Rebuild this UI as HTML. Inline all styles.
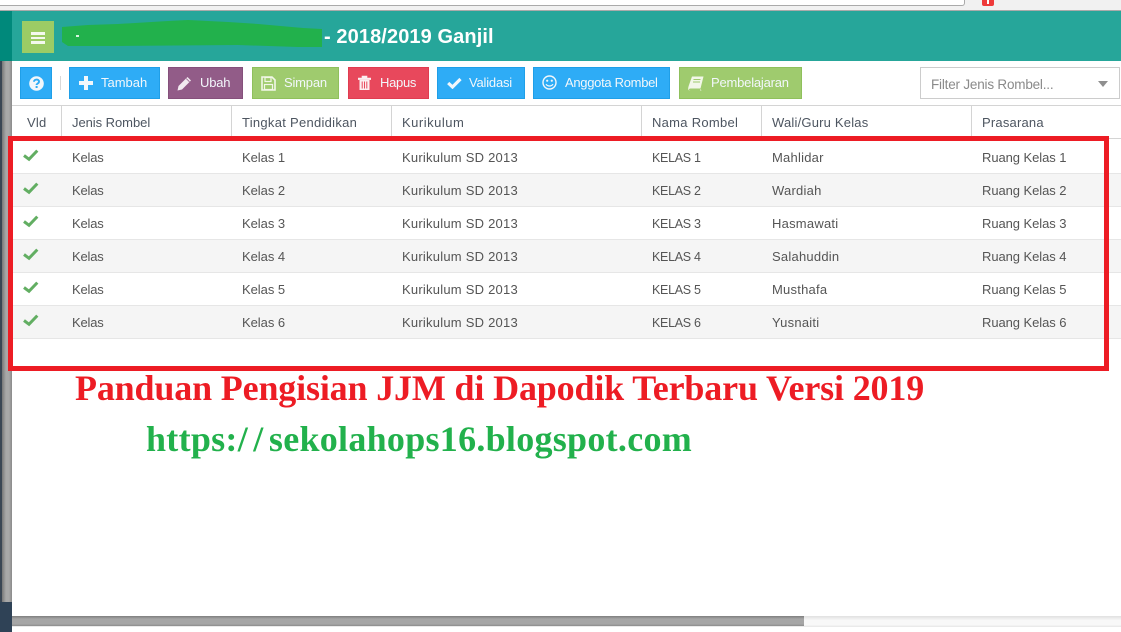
<!DOCTYPE html>
<html><head><meta charset="utf-8">
<style>
html,body{margin:0;padding:0;background:#fff;}
#p{position:relative;width:1121px;height:632px;overflow:hidden;background:#fff;font-family:"Liberation Sans",sans-serif;}
#p div,#p span.a,#p svg{position:absolute;}
.t{position:absolute;font-size:13px;color:#555;white-space:nowrap;letter-spacing:.23px;line-height:16px;margin-top:1px;}
.c1{letter-spacing:-.2px;}
.c2{letter-spacing:-.05px;}
.c4{font-size:12.5px;letter-spacing:-.3px;}
.c6{letter-spacing:-.07px;}
.h{position:absolute;font-size:13px;color:#4d5560;white-space:nowrap;letter-spacing:.2px;line-height:16px;top:115px;}
.b{position:absolute;top:67px;height:30px;border:1px solid;color:#fff;box-sizing:content-box;}
.b b{position:absolute;top:7px;font-weight:normal;font-size:13px;letter-spacing:-.2px;line-height:16px;white-space:nowrap;color:#f2f7fb;}
.blue{background:#2eacf6;border-color:#1f9fe8;}
.green{background:#9fcb6e;border-color:#8fc05c;}
.row{left:12px;width:1109px;height:32px;border-bottom:1px solid #e6e6e6;}
.vl{position:absolute;top:106px;width:1px;height:32px;background:#d4d4d4;}
</style></head><body><div id="p">
<div style="left:0;top:0;width:1121px;height:10px;background:#f1f1f1"></div>
<div style="left:0;top:0;width:964px;height:5px;background:#fff;border-bottom:1px solid #aaa;border-right:1px solid #aaa;border-radius:0 0 3px 0"></div>
<div style="left:982px;top:0;width:12px;height:6px;background:#ee3a3a;border-radius:0 0 2px 2px"></div>
<div style="left:987px;top:0;width:2px;height:4px;background:#fff"></div>
<div style="left:0;top:10px;width:1121px;height:1px;background:#aaa"></div>

<div style="left:12px;top:11px;width:1109px;height:50px;background:#26a69a"></div>
<div style="left:0;top:11px;width:12px;height:50px;background:#00897b"></div>
<div style="left:0;top:61px;width:2px;height:541px;background:#3a4654"></div>
<div style="left:2px;top:61px;width:10px;height:541px;background:linear-gradient(90deg,#777,#a8a8a8 40%,#a8a8a8 70%,#8a8a8a)"></div>
<div style="left:0;top:602px;width:12px;height:30px;background:#2f4256"></div>

<div style="left:22px;top:21px;width:32px;height:32px;background:#9ccc65"></div>
<div style="left:31px;top:32px;width:14px;height:2.6px;background:#f4f9ee"></div>
<div style="left:31px;top:36.5px;width:14px;height:2.6px;background:#f4f9ee"></div>
<div style="left:31px;top:41px;width:14px;height:2.6px;background:#f4f9ee"></div>

<svg style="left:58px;top:16px" width="268" height="34"><path d="M4 11 L30 9 L60 8 L110 5 L130 4 L170 6 L200 8 L245 12 L264 13 L264 31 L240 31 L180 29 L60 30 L10 30 L4 26Z" fill="#22b14c"/></svg>
<div style="left:76px;top:35px;width:3px;height:1.5px;background:#d9f5e0"></div>
<span class="a" style="left:324px;top:25px;font-size:20px;font-weight:bold;color:#fff;line-height:24px;white-space:nowrap;letter-spacing:.1px">- 2018/2019 Ganjil</span>

<!-- toolbar -->
<div class="b blue" style="left:20px;width:30px"><svg style="left:8px;top:8px" width="15" height="15" viewBox="0 0 15 15"><circle cx="7.5" cy="7.5" r="7.3" fill="#f2f7fb"/><path d="M5 5.8C5 2.8 10 2.8 10 5.6C10 7.6 7.6 7.4 7.6 9" fill="none" stroke="#2eacf6" stroke-width="1.9"/><rect x="6.6" y="10" width="2" height="2" fill="#2eacf6"/></svg></div>
<div style="left:60px;top:76px;width:1px;height:14px;background:#d8d8d8"></div>

<div class="b blue" style="left:69px;width:89px"><svg style="left:9px;top:8px" width="14" height="14" viewBox="0 0 14 14"><path d="M5 0h4v5h5v4H9v5H5V9H0V5h5z" fill="#f2f7fb"/></svg><b style="left:31px;letter-spacing:0">Tambah</b></div>
<div class="b" style="left:168px;width:73px;background:#925c88;border-color:#85507b"><svg style="left:8px;top:8px" width="15" height="15" viewBox="0 0 15 15"><path d="M0.5 14.5L1.5 10L10.5 1L14 4.5L5 13.5Z" fill="#f2eaf0"/><path d="M9.3 2.6L12.5 5.8" stroke="#925c88" stroke-width=".8"/></svg><b style="left:31px">Ubah</b></div>
<div class="b green" style="left:252px;width:85px"><svg style="left:8px;top:8px" width="15" height="15" viewBox="0 0 15 15"><path d="M1 1h10l3 3v10H1z" fill="none" stroke="#f2f7e8" stroke-width="1.6"/><rect x="4" y="1.5" width="6" height="4" fill="none" stroke="#f2f7e8" stroke-width="1.2"/><rect x="3.5" y="8.5" width="8" height="5" fill="none" stroke="#f2f7e8" stroke-width="1.2"/></svg><b style="left:31px">Simpan</b></div>
<div class="b" style="left:348px;width:79px;background:#e8485c;border-color:#e03c50"><svg style="left:9px;top:7px" width="13" height="16" viewBox="0 0 13 16"><path d="M0 3h13v1.6H0zM4 3V1h5v2" fill="#fbeef0" stroke="#fbeef0" stroke-width=".6"/><path d="M1.5 5h10v10h-10z" fill="#fbeef0"/><path d="M4.2 6.5v7M6.5 6.5v7M8.8 6.5v7" stroke="#e8485c" stroke-width="1"/></svg><b style="left:31px;letter-spacing:-.3px">Hapus</b></div>
<div class="b blue" style="left:437px;width:86px"><svg style="left:9px;top:9px" width="15" height="12" viewBox="0 0 15 12"><path d="M1.2 6L5.5 10L13.5 2" fill="none" stroke="#f2f7fb" stroke-width="3.2"/></svg><b style="left:31px">Validasi</b></div>
<div class="b blue" style="left:533px;width:135px"><svg style="left:8px;top:7px" width="15" height="15" viewBox="0 0 15 15"><circle cx="7.5" cy="7.5" r="6.5" fill="none" stroke="#f2f7fb" stroke-width="1.4"/><circle cx="5.2" cy="5.7" r="1.1" fill="#f2f7fb"/><circle cx="9.8" cy="5.7" r="1.1" fill="#f2f7fb"/><path d="M4 9.2C5.5 11.6 9.5 11.6 11 9.2" fill="none" stroke="#f2f7fb" stroke-width="1.2"/></svg><b style="left:31px;letter-spacing:-.3px">Anggota Rombel</b></div>
<div class="b green" style="left:679px;width:121px"><svg style="left:8px;top:8px" width="16" height="15" viewBox="0 0 16 15"><path d="M4 0.5h11.5L12.5 12.5H2.5C0.5 12.5 0.5 14.5 2.5 14.5H12L12.5 13L13.5 14.5H2C-0.5 14.5 0 12 1 9Z" fill="#f2f7e8"/><path d="M5.5 3.5h7M5 6h7" stroke="#9fcb6e" stroke-width=".9"/></svg><b style="left:31px">Pembelajaran</b></div>

<div style="left:920px;top:67px;width:198px;height:30px;border:1px solid #ccc;background:#fff"></div>
<span class="a" style="left:931px;top:77px;font-size:13.5px;letter-spacing:-.2px;color:#8a8a8a;line-height:16px;white-space:nowrap">Filter Jenis Rombel...</span>
<svg style="left:1098px;top:81px" width="11" height="7"><path d="M0 0h10L5 6z" fill="#8f8f8f"/></svg>

<!-- table head -->
<div style="left:12px;top:105px;width:1109px;height:1px;background:#d4d4d4"></div>
<div style="left:12px;top:138px;width:1109px;height:1px;background:#d4d4d4"></div>
<div class="vl" style="left:61px"></div><div class="vl" style="left:231px"></div><div class="vl" style="left:391px"></div><div class="vl" style="left:641px"></div><div class="vl" style="left:761px"></div><div class="vl" style="left:971px"></div>
<span class="h" style="left:27px">Vld</span><span class="h" style="left:72px;letter-spacing:-.05px">Jenis Rombel</span><span class="h" style="left:242px;letter-spacing:.28px">Tingkat Pendidikan</span><span class="h" style="left:402px;letter-spacing:.5px">Kurikulum</span><span class="h" style="left:652px;letter-spacing:.28px">Nama Rombel</span><span class="h" style="left:772px">Wali/Guru Kelas</span><span class="h" style="left:982px">Prasarana</span>

<!-- rows -->
<div class="row" style="top:141px;background:#fff"></div>
<div class="row" style="top:174px;background:#f5f5f5"></div>
<div class="row" style="top:207px;background:#fff"></div>
<div class="row" style="top:240px;background:#f5f5f5"></div>
<div class="row" style="top:273px;background:#fff"></div>
<div class="row" style="top:306px;background:#f5f5f5"></div>

<svg style="left:22px;top:148px" width="17" height="14" viewBox="0 0 17 14"><path d="M2 7.5L7 11.3L15.3 2.6" fill="none" stroke="#62ae62" stroke-width="3"/></svg>
<svg style="left:22px;top:181px" width="17" height="14" viewBox="0 0 17 14"><path d="M2 7.5L7 11.3L15.3 2.6" fill="none" stroke="#62ae62" stroke-width="3"/></svg>
<svg style="left:22px;top:214px" width="17" height="14" viewBox="0 0 17 14"><path d="M2 7.5L7 11.3L15.3 2.6" fill="none" stroke="#62ae62" stroke-width="3"/></svg>
<svg style="left:22px;top:247px" width="17" height="14" viewBox="0 0 17 14"><path d="M2 7.5L7 11.3L15.3 2.6" fill="none" stroke="#62ae62" stroke-width="3"/></svg>
<svg style="left:22px;top:280px" width="17" height="14" viewBox="0 0 17 14"><path d="M2 7.5L7 11.3L15.3 2.6" fill="none" stroke="#62ae62" stroke-width="3"/></svg>
<svg style="left:22px;top:313px" width="17" height="14" viewBox="0 0 17 14"><path d="M2 7.5L7 11.3L15.3 2.6" fill="none" stroke="#62ae62" stroke-width="3"/></svg>

<span class="t c1" style="left:72px;top:149px">Kelas</span><span class="t c2" style="left:242px;top:149px">Kelas 1</span><span class="t" style="left:402px;top:149px">Kurikulum SD 2013</span><span class="t c4" style="left:652px;top:149px">KELAS 1</span><span class="t" style="left:772px;top:149px">Mahlidar</span><span class="t c6" style="left:982px;top:149px">Ruang Kelas 1</span>
<span class="t c1" style="left:72px;top:182px">Kelas</span><span class="t c2" style="left:242px;top:182px">Kelas 2</span><span class="t" style="left:402px;top:182px">Kurikulum SD 2013</span><span class="t c4" style="left:652px;top:182px">KELAS 2</span><span class="t" style="left:772px;top:182px">Wardiah</span><span class="t c6" style="left:982px;top:182px">Ruang Kelas 2</span>
<span class="t c1" style="left:72px;top:215px">Kelas</span><span class="t c2" style="left:242px;top:215px">Kelas 3</span><span class="t" style="left:402px;top:215px">Kurikulum SD 2013</span><span class="t c4" style="left:652px;top:215px">KELAS 3</span><span class="t" style="left:772px;top:215px">Hasmawati</span><span class="t c6" style="left:982px;top:215px">Ruang Kelas 3</span>
<span class="t c1" style="left:72px;top:248px">Kelas</span><span class="t c2" style="left:242px;top:248px">Kelas 4</span><span class="t" style="left:402px;top:248px">Kurikulum SD 2013</span><span class="t c4" style="left:652px;top:248px">KELAS 4</span><span class="t" style="left:772px;top:248px">Salahuddin</span><span class="t c6" style="left:982px;top:248px">Ruang Kelas 4</span>
<span class="t c1" style="left:72px;top:281px">Kelas</span><span class="t c2" style="left:242px;top:281px">Kelas 5</span><span class="t" style="left:402px;top:281px">Kurikulum SD 2013</span><span class="t c4" style="left:652px;top:281px">KELAS 5</span><span class="t" style="left:772px;top:281px">Musthafa</span><span class="t c6" style="left:982px;top:281px">Ruang Kelas 5</span>
<span class="t c1" style="left:72px;top:314px">Kelas</span><span class="t c2" style="left:242px;top:314px">Kelas 6</span><span class="t" style="left:402px;top:314px">Kurikulum SD 2013</span><span class="t c4" style="left:652px;top:314px">KELAS 6</span><span class="t" style="left:772px;top:314px">Yusnaiti</span><span class="t c6" style="left:982px;top:314px">Ruang Kelas 6</span>

<!-- red box -->
<div style="left:8px;top:136px;width:1091px;height:225px;border:5px solid #ed1c24"></div>

<span class="a" style="left:75px;top:368px;font-family:'Liberation Serif',serif;font-weight:bold;font-size:36px;line-height:40px;color:#ed1c24;white-space:nowrap;letter-spacing:-.16px">Panduan Pengisian JJM di Dapodik Terbaru Versi 2019</span>
<span class="a" style="left:146px;top:418px;font-family:'Liberation Serif',serif;font-weight:bold;font-size:36px;line-height:42px;color:#22b14c;white-space:nowrap;letter-spacing:.28px">https:<span style="letter-spacing:5.6px">//</span>sekolahops16.blogspot.com</span>

<!-- scrollbar -->
<div style="left:12px;top:616px;width:1109px;height:11px;background:linear-gradient(180deg,#e0e0e0,#f8f8f8 40%,#f8f8f8 80%,#e6e6e6)"></div>
<div style="left:12px;top:616px;width:792px;height:10px;background:linear-gradient(180deg,#7e7e7e,#a6a6a6 30%,#a6a6a6 80%,#8c8c8c)"></div>
</div></body></html>
